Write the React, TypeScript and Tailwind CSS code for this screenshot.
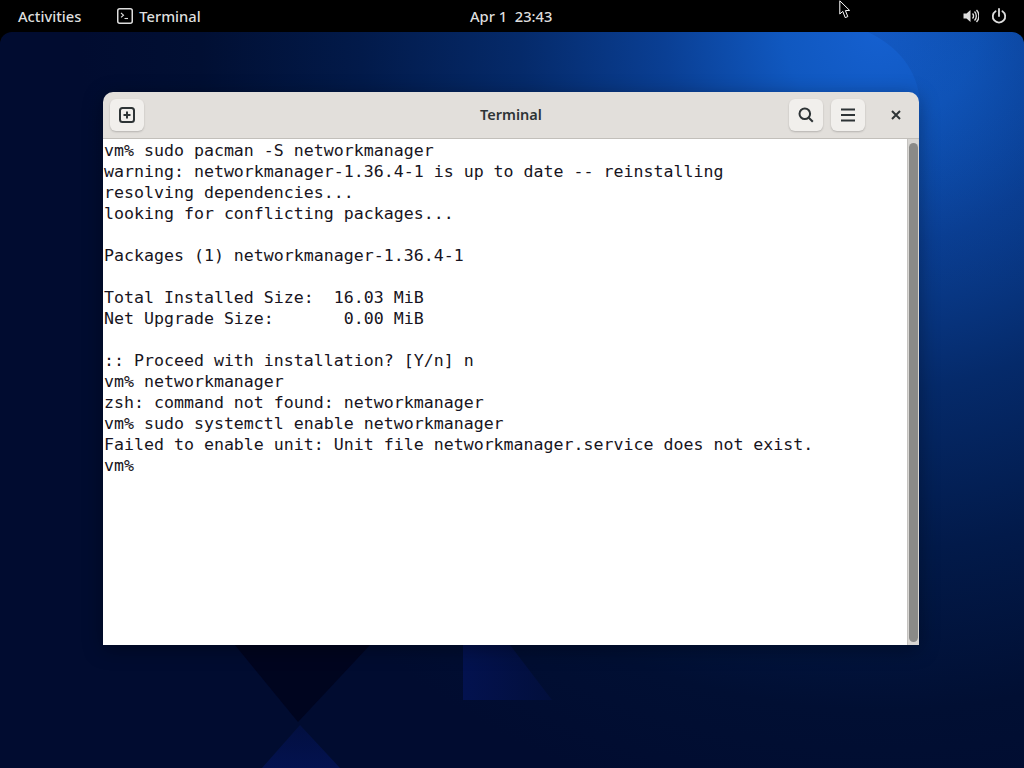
const lines = [
  'vm% sudo pacman -S networkmanager',
  'warning: networkmanager-1.36.4-1 is up to date -- reinstalling',
  'resolving dependencies...',
  'looking for conflicting packages...',
  '',
  'Packages (1) networkmanager-1.36.4-1',
  '',
  'Total Installed Size:  16.03 MiB',
  'Net Upgrade Size:       0.00 MiB',
  '',
  ':: Proceed with installation? [Y/n] n',
  'vm% networkmanager',
  'zsh: command not found: networkmanager',
  'vm% sudo systemctl enable networkmanager',
  'Failed to enable unit: Unit file networkmanager.service does not exist.',
  'vm%',
];

const Wallpaper = () => (
  <svg className="absolute inset-0 h-full w-full" viewBox="0 32 1024 736" preserveAspectRatio="none">
    <defs>
      <radialGradient id="glow" gradientUnits="userSpaceOnUse" cx="880" cy="30" r="800">
        <stop offset="0" stopColor="#1560d0" />
        <stop offset="0.12" stopColor="#1058c0" />
        <stop offset="0.27" stopColor="#0a3f94" />
        <stop offset="0.45" stopColor="#052a6a" />
        <stop offset="0.65" stopColor="#021a4a" />
        <stop offset="0.85" stopColor="#010f33" />
        <stop offset="1" stopColor="#010c30" />
      </radialGradient>
      <linearGradient id="edge" gradientUnits="userSpaceOnUse" x1="0" y1="32" x2="0" y2="300">
        <stop offset="0" stopColor="#03205a" stopOpacity="0.12" />
        <stop offset="1" stopColor="#03205a" stopOpacity="0" />
      </linearGradient>
      <linearGradient id="tri" gradientUnits="userSpaceOnUse" x1="463" y1="0" x2="552" y2="0">
        <stop offset="0" stopColor="#03124f" />
        <stop offset="1" stopColor="#020f3c" />
      </linearGradient>
      <linearGradient id="tri2" gradientUnits="userSpaceOnUse" x1="0" y1="725" x2="0" y2="768">
        <stop offset="0" stopColor="#020f40" />
        <stop offset="1" stopColor="#03124f" />
      </linearGradient>
    </defs>
    <rect x="0" y="32" width="1024" height="736" fill="url(#glow)" />
    <path d="M868 32 Q925 60 920 120 L920 300 L1024 300 L1024 32 Z" fill="url(#edge)" />
    <path d="M235 645 L370 645 L298 722 Z" fill="#00051f" />
    <path d="M463 645 L510 645 L552 700 L463 700 Z" fill="url(#tri)" />
    <path d="M300 725 L340 768 L262 768 Z" fill="url(#tri2)" />
  </svg>
);

const HeaderButton = ({ children }: { children: React.ReactNode }) => (
  <div className="flex h-8 w-[34px] items-center justify-center rounded-md bg-[#f1efec] shadow-[0_1px_2px_rgba(0,0,0,0.2)]">
    {children}
  </div>
);

export default function App() {
  return (
    <div className="relative h-[768px] w-[1024px] overflow-hidden bg-black font-['Noto_Sans',sans-serif]">
      <div className="flex h-8 items-center justify-between text-[14.7px] font-medium text-[#dedede]">
        <div className="flex items-center">
          <span className="ml-[18px]">Activities</span>
          <svg className="ml-[36px]" width="16" height="16" viewBox="0 0 16 16" fill="none">
            <rect x="0.75" y="0.75" width="14.5" height="14.5" rx="2" stroke="#dedede" strokeWidth="1.5" />
            <path d="M4 5l2.5 2.2L4 9.4" stroke="#dedede" strokeWidth="1.1" />
            <path d="M7.5 10.5h3.5" stroke="#dedede" strokeWidth="1.1" />
          </svg>
          <span className="ml-[6px]">Terminal</span>
        </div>
        <span className="absolute left-[470px]">Apr 1&nbsp; 23:43</span>
        <div className="mr-[17px] flex items-center gap-[12px]">
          <svg width="16" height="16" viewBox="0 0 16 16" fill="none" stroke="#dedede">
            <path d="M0.5 5.5h3L7.5 2v12l-4-3.5h-3z" fill="#dedede" stroke="none" />
            <path d="M9.5 5.5a3.5 3.5 0 0 1 0 5" strokeWidth="1.4" />
            <path d="M11.5 3.5a6.4 6.4 0 0 1 0 9" strokeWidth="1.4" />
            <path d="M13.5 2a8.6 8.6 0 0 1 0 12" strokeWidth="1.4" />
          </svg>
          <svg width="16" height="16" viewBox="0 0 16 16" fill="none" stroke="#dedede" strokeWidth="1.8" strokeLinecap="round">
            <path d="M8 1v7" />
            <path d="M4.6 3.2a6.2 6.2 0 1 0 6.8 0" />
          </svg>
        </div>
      </div>

      <svg className="absolute left-[839px] top-0" width="13" height="20" viewBox="0 0 13 20">
        <path d="M0.8 0.8 L0.8 14 L3.8 11.4 L6.2 17.6 L8.8 16.6 L6.4 10.6 L10.6 10.4 Z" fill="#000" stroke="#fff" strokeWidth="1" />
      </svg>

      <div className="absolute inset-x-0 bottom-0 top-8 overflow-hidden rounded-t-xl">
        <Wallpaper />
      </div>

      {/* terminal window */}
      <div className="absolute left-[103px] top-[92px] flex h-[553px] w-[816px] flex-col overflow-hidden rounded-t-[10px] shadow-[0_4px_20px_rgba(0,0,0,0.35)]">
        <div className="relative flex h-[47px] shrink-0 items-center justify-between border-b border-[#c2bfba] bg-[#e2dfdb] pl-[7px] pr-[5px]">
          <HeaderButton>
            <svg width="16" height="16" viewBox="0 0 16 16" fill="none" stroke="#2e3436">
              <rect x="1" y="1" width="14" height="14" rx="2.5" strokeWidth="2" />
              <path d="M8 4.5v7M4.5 8h7" strokeWidth="2" />
            </svg>
          </HeaderButton>
          <span className="absolute left-[377px] text-[14.5px] font-semibold text-[#2e3436]">Terminal</span>
          <div className="flex items-center">
            <HeaderButton>
              <svg width="16" height="16" viewBox="0 0 16 16" fill="none" stroke="#2e3436" strokeWidth="2">
                <circle cx="6.8" cy="6.8" r="5.3" />
                <path d="M10.8 10.8l4 4" />
              </svg>
            </HeaderButton>
            <div className="ml-[8px]">
              <HeaderButton>
                <svg width="16" height="16" viewBox="0 0 16 16" fill="none" stroke="#2e3436" strokeWidth="2">
                  <path d="M1 2.5h14M1 8h14M1 13.5h14" />
                </svg>
              </HeaderButton>
            </div>
            <div className="ml-[13px] flex h-8 w-[36px] items-center justify-center">
              <svg width="10" height="10" viewBox="0 0 10 10" fill="none" stroke="#2e3436" strokeWidth="2">
                <path d="M1 1l8 8M9 1l-8 8" />
              </svg>
            </div>
          </div>
        </div>

        <div className="flex min-h-0 flex-1 bg-white">
          <pre className="flex-1 pl-px pt-px font-['DejaVu_Sans_Mono',monospace] text-[16.6px] leading-[21px] text-[#171421]">
            {lines.join('\n')}
          </pre>
          <div className="w-[12px] shrink-0 border-l border-[#c4c2bf] bg-[#d8d6d3] px-[1px] pb-[3px] pt-[4px]">
            <div className="h-full w-full rounded-full bg-[#8a8a88]" />
          </div>
        </div>
      </div>
    </div>
  );
}
